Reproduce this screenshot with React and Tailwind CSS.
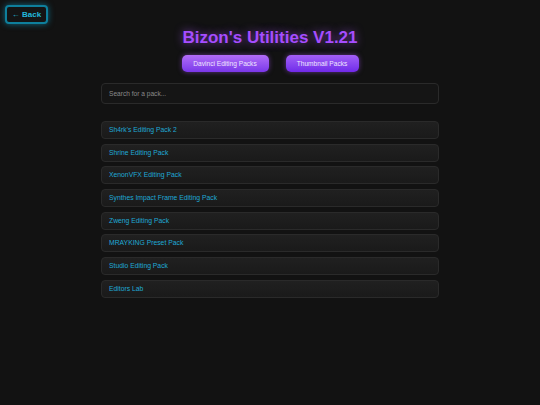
const packs = [
  "Sh4rk's Editing Pack 2",
  'Shrine Editing Pack',
  'XenonVFX Editing Pack',
  'Synthes Impact Frame Editing Pack',
  'Zweng Editing Pack',
  'MRAYKING Preset Pack',
  'Studio Editing Pack',
  'Editors Lab',
];

export default function App() {
  return (
    <div
      className="relative w-[540px] h-[405px] bg-[#121212] overflow-hidden"
      style={{ fontFamily: '"Liberation Sans", Arial, sans-serif' }}
    >
      <button className="absolute left-[5px] top-[5px] w-[43px] h-[19px] flex items-center justify-center rounded-[4px] border-2 border-[#0e7f9c] bg-[#141414] text-[#22b8dc] text-[8px] font-bold shadow-[0_0_6px_rgba(14,160,200,0.6)]">
        ← Back
      </button>

      <div className="flex flex-col items-center pt-[27px]">
        <h1 className="text-[17px] leading-[22px] font-bold text-[#a64dff] [text-shadow:0_0_8px_rgba(168,85,247,0.7)]">
          Bizon's Utilities V1.21
        </h1>

        <div className="flex gap-[17px] mt-[6px]">
          <button className="w-[87px] h-[17px] rounded-[5px] bg-gradient-to-b from-[#b26cf7] to-[#7b36ea] text-[#f0e6ff] text-[6.6px] shadow-[0_0_5px_rgba(168,85,247,0.5)]">
            Davinci Editing Packs
          </button>
          <button className="w-[73px] h-[17px] rounded-[5px] bg-gradient-to-b from-[#a35ef6] to-[#7128ea] text-[#f0e6ff] text-[6.6px] shadow-[0_0_5px_rgba(168,85,247,0.5)]">
            Thumbnail Packs
          </button>
        </div>

        <div className="w-[338px] mt-[11px]">
          <div className="h-[21px] flex items-center px-[7px] rounded-[4px] border border-[#2a2a2a] bg-[#151515] text-[6.6px] text-[#8a8a8a]">
            Search for a pack...
          </div>

          <div className="flex flex-col gap-[4.7px] mt-[17px]">
            {packs.map((name) => (
              <div
                key={name}
                className="h-[18px] flex items-center px-[7px] rounded-[4px] border border-[#2a2a2a] bg-gradient-to-b from-[#202020] to-[#1a1a1a] text-[6.8px] text-[#1fa9d6]"
              >
                {name}
              </div>
            ))}
          </div>
        </div>
      </div>
    </div>
  );
}
